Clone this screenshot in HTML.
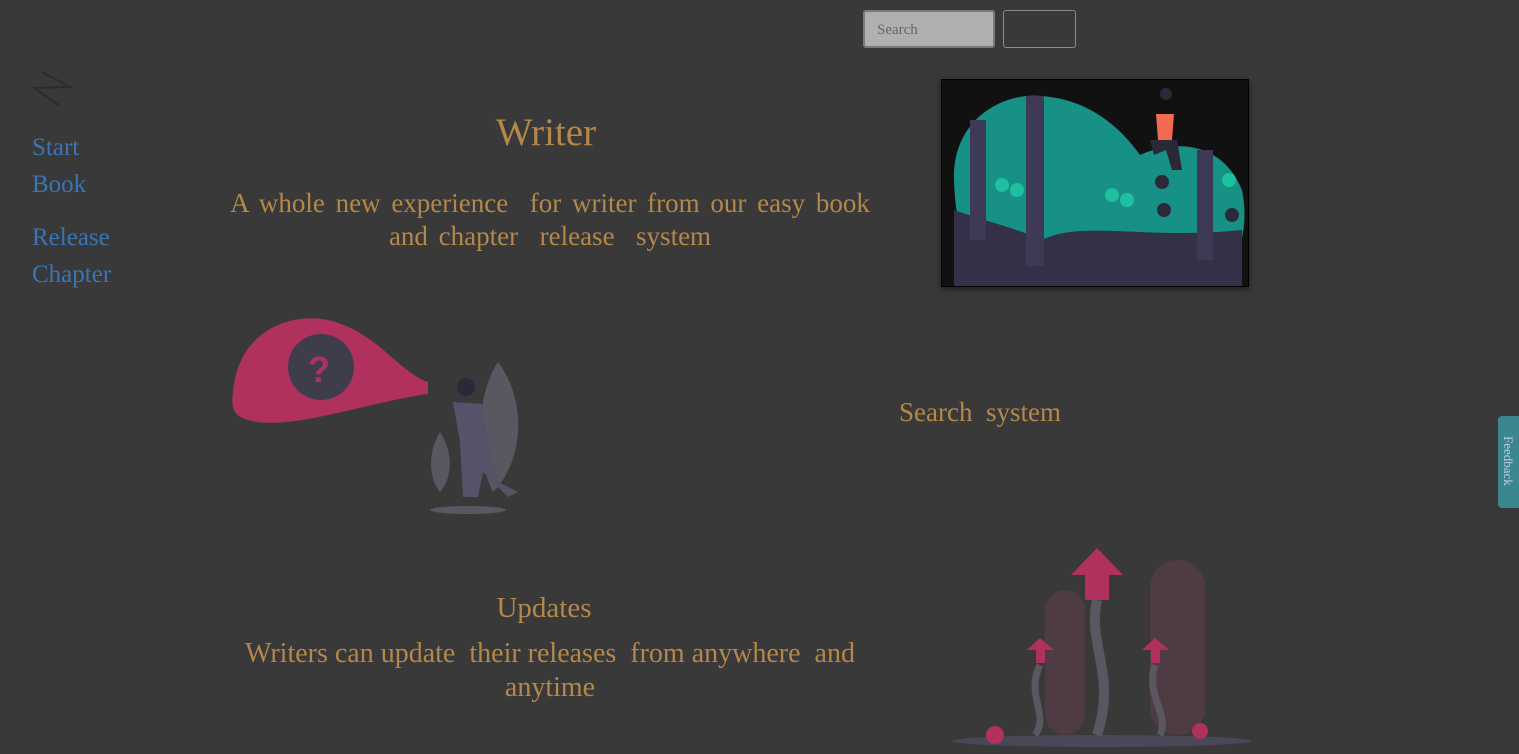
<!DOCTYPE html>
<html><head><meta charset="utf-8"><style>
body{margin:0;width:1519px;height:754px;background:#393939;font-family:"Liberation Serif",serif;overflow:hidden;position:relative}
.a{position:absolute}
.nav{left:32px;color:#3a74b6;font-size:25px;line-height:37px}
.g{color:#b38849;text-align:center}
</style></head><body>
<div class="a" style="left:863px;top:10px;width:132px;height:38px;background:#b0b0b0;border:2px solid #7a7a7a;border-radius:3px;box-sizing:border-box;color:#666;font-size:15px;line-height:36px;padding-left:12px">Search</div>
<div class="a" style="left:1003px;top:10px;width:73px;height:38px;border:1px solid #8a8a8a;border-radius:3px;box-sizing:border-box"></div>
<svg class="a" style="left:30px;top:68px" width="44" height="44"><path d="M12 4 L40 19 L4 20 L30 38" stroke="#2c2c2c" stroke-width="2" fill="none"/></svg>
<div class="a nav" style="top:129px">Start<br>Book</div>
<div class="a nav" style="top:219px">Release<br>Chapter</div>
<div class="a g" style="left:446px;top:110px;width:200px;font-size:39px">Writer</div>
<div class="a g" style="left:200px;top:187px;width:700px;font-size:27px;line-height:33px;word-spacing:4px">A whole new experience &nbsp;for writer from our easy book<br>and chapter &nbsp;release &nbsp;system</div>
<div class="a g" style="left:880px;top:397px;width:200px;font-size:27px">Search &nbsp;system</div>
<div class="a g" style="left:444px;top:592px;width:200px;font-size:29px">Updates</div>
<div class="a g" style="left:225px;top:637px;width:650px;font-size:28px;line-height:34px">Writers can update &nbsp;their releases &nbsp;from anywhere &nbsp;and<br>anytime</div>
<div class="a" style="left:941px;top:79px;width:308px;height:208px;background:#111;border:1px solid #000;box-sizing:border-box;box-shadow:0 2px 6px rgba(0,0,0,.5);overflow:hidden">
<svg width="308" height="208"><path d="M12 100 C10 40 60 12 100 16 C150 20 180 50 198 75 C230 60 280 60 300 110 C310 160 290 210 240 203 L70 203 C30 200 14 160 12 100Z" fill="#179185"/>
<path d="M12 130 C40 140 80 150 100 160 C140 140 200 160 300 150 L300 208 L12 208Z" fill="#333048"/>
<rect x="84" y="16" width="18" height="170" fill="#3e3a55"/><rect x="28" y="40" width="16" height="120" fill="#3e3a55"/><rect x="255" y="70" width="16" height="110" fill="#3e3a55"/>
<circle cx="60" cy="105" r="7" fill="#1fc0a0"/><circle cx="75" cy="110" r="7" fill="#1fc0a0"/><circle cx="170" cy="115" r="7" fill="#1fc0a0"/><circle cx="185" cy="120" r="7" fill="#1fc0a0"/><circle cx="287" cy="100" r="7" fill="#1fc0a0"/>
<circle cx="220" cy="102" r="7" fill="#2b2838"/><circle cx="222" cy="130" r="7" fill="#2b2838"/><circle cx="290" cy="135" r="7" fill="#2b2838"/>
<circle cx="224" cy="14" r="6" fill="#2b2838"/><path d="M214 34 L232 34 L230 60 L216 60Z" fill="#f26a50"/><path d="M208 60 L235 60 L240 90 L230 90 L224 70 L212 75Z" fill="#2b2838"/></svg></div>
<svg class="a" style="left:228px;top:312px" width="310" height="210">
<path d="M5 80 C10 20 60 0 100 8 C150 20 170 60 200 70 L200 82 C140 90 60 120 20 108 C5 104 3 95 5 80Z" fill="#b0305e"/>
<circle cx="93" cy="55" r="33" fill="#3f3d4c"/><text x="80" y="70" font-size="36" font-family="Liberation Sans" font-weight="bold" fill="#b0305e">?</text>
<path d="M270 50 C300 90 295 150 265 180 C245 140 250 80 270 50Z" fill="#5a5760"/><path d="M212 120 C225 140 225 165 212 180 C200 165 200 140 212 120Z" fill="#5a5760"/>
<path d="M225 90 L255 92 L258 120 L270 170 L290 180 L280 185 L255 160 L250 185 L235 185 L232 130Z" fill="#55526a"/><circle cx="238" cy="75" r="9" fill="#2b2838"/>
<ellipse cx="240" cy="198" rx="38" ry="4" fill="#5a5760"/></svg>
<svg class="a" style="left:950px;top:545px" width="305" height="209">
<ellipse cx="152" cy="196" rx="150" ry="6" fill="#4a4858"/>
<rect x="200" y="15" width="55" height="175" rx="27" fill="#4e3b44"/><rect x="95" y="45" width="40" height="145" rx="20" fill="#4e3b44"/>
<path d="M121 30 L147 3 L173 30 L159 30 L159 55 L135 55 L135 30Z" fill="#b0305e"/>
<path d="M147 55 C137 100 167 130 147 190" stroke="#5a5760" stroke-width="10" fill="none"/><path d="M90 120 C75 150 100 170 85 190" stroke="#5a5760" stroke-width="7" fill="none"/><path d="M205 120 C195 150 220 170 210 190" stroke="#5a5760" stroke-width="7" fill="none"/>
<path d="M77 105 L90 93 L104 105 L95 105 L95 118 L86 118 L86 105Z" fill="#b0305e"/><path d="M192 105 L205 93 L219 105 L210 105 L210 118 L201 118 L201 105Z" fill="#b0305e"/>
<circle cx="45" cy="190" r="9" fill="#b0305e"/><circle cx="250" cy="186" r="8" fill="#b0305e"/></svg>
<div class="a" style="left:1498px;top:416px;width:30px;height:92px;background:#3b8790;border-radius:4px"><div style="transform:rotate(90deg);transform-origin:0 0;position:absolute;left:18px;top:20px;color:#bcd;font-size:13px;white-space:nowrap">Feedback</div></div>
</body></html>
